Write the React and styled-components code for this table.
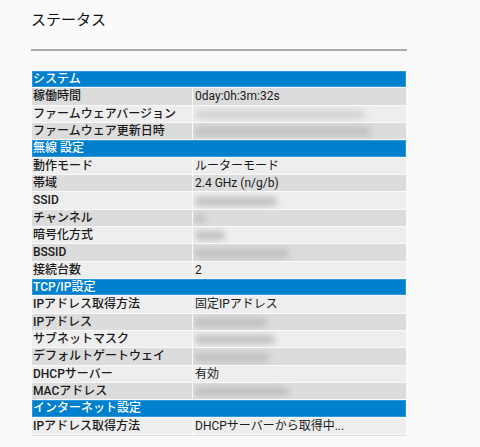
import React from "react";
import styled, { createGlobalStyle } from "styled-components";

const GlobalStyle = createGlobalStyle`
  html, body { margin: 0; padding: 0; background: #fafafa; }
  body { font-family: Roboto, "Noto Sans CJK JP", "Noto Sans", sans-serif; color: #1a1a1a; }
`;

const Page = styled.div`
  width: 376px;
  padding: 0 0 0 31px;
`;

const Title = styled.h2`
  margin: 0;
  padding-top: 9px;
  font-size: 15px;
  line-height: 22px;
  font-weight: 400;
  color: #111111;
`;

const Rule = styled.div`
  margin-top: 18px;
  height: 2px;
  background: #aaaaaa;
`;

const Table = styled.table`
  margin-top: 19px;
  width: 376px;
  border-collapse: separate;
  border-spacing: 1px;
  table-layout: fixed;
  font-size: 12px;
`;

const Col = styled.col`
  width: ${(p) => p.$w}px;
`;

const Section = styled.th`
  background: #0080cc;
  color: #ffffff;
  text-align: left;
  font-weight: 500;
  height: 16.33px;
  line-height: 16px;
  padding: 0 1px;
  box-shadow: inset 0 0 0 1px #2c98dc;
`;

const Label = styled.th`
  text-align: left;
  font-weight: 500;
  height: 16.33px;
  line-height: 16px;
  padding: 0 2px 0 1px;
  background: ${(p) => (p.$dark ? "#dcdcdc" : "#eeeeee")};
  white-space: nowrap;
  overflow: hidden;
`;

const Value = styled.td`
  height: 16.33px;
  line-height: 16px;
  padding: 0 2px;
  background: ${(p) => (p.$dark ? "#dcdcdc" : "#eeeeee")};
  white-space: nowrap;
  overflow: hidden;
`;

const Blur = styled.span`
  display: inline-block;
  vertical-align: middle;
  height: 9px;
  border-radius: 5px;
  background: ${(p) => (p.$faint ? "#d2d2d2" : "#bfbfbf")};
  filter: blur(3px);
`;

const Thin = styled.td`
  height: 1px;
  padding: 0;
  background: #dcdcdc;
`;

const sections = [
  {
    title: "システム",
    rows: [
      ["稼働時間", "0day:0h:3m:32s", true],
      ["ファームウェアバージョン", { blur: 170, faint: true }, false],
      ["ファームウェア更新日時", { blur: 176 }, true],
    ],
  },
  {
    title: "無線 設定",
    rows: [
      ["動作モード", "ルーターモード", false],
      ["帯域", "2.4 GHz (n/g/b)", true],
      ["SSID", { blur: 82 }, false],
      ["チャンネル", { blur: 10 }, true],
      ["暗号化方式", { blur: 30 }, false],
      ["BSSID", { blur: 94 }, true],
      ["接続台数", "2", false],
    ],
  },
  {
    title: "TCP/IP設定",
    rows: [
      ["IPアドレス取得方法", "固定IPアドレス", false],
      ["IPアドレス", { blur: 72 }, true],
      ["サブネットマスク", { blur: 80 }, false],
      ["デフォルトゲートウェイ", { blur: 74 }, true],
      ["DHCPサーバー", "有効", false],
      ["MACアドレス", { blur: 94 }, true],
    ],
  },
  {
    title: "インターネット設定",
    rows: [["IPアドレス取得方法", "DHCPサーバーから取得中...", false]],
  },
];

export default function App() {
  return (
    <>
      <GlobalStyle />
      <Page>
        <Title>ステータス</Title>
        <Rule />
        <Table>
          <colgroup>
            <Col $w={160} />
            <Col $w={213} />
          </colgroup>
          <tbody>
            {sections.map((s) => (
              <React.Fragment key={s.title}>
                <tr>
                  <Section colSpan={2}>{s.title}</Section>
                </tr>
                {s.rows.map(([label, value, dark], i) => (
                  <tr key={s.title + i}>
                    <Label $dark={dark}>{label}</Label>
                    <Value $dark={dark}>
                      {typeof value === "string" ? (
                        value
                      ) : (
                        <Blur $faint={value.faint} style={{ width: value.blur }} />
                      )}
                    </Value>
                  </tr>
                ))}
              </React.Fragment>
            ))}
            <tr>
              <Thin />
              <Thin />
            </tr>
          </tbody>
        </Table>
      </Page>
    </>
  );
}
